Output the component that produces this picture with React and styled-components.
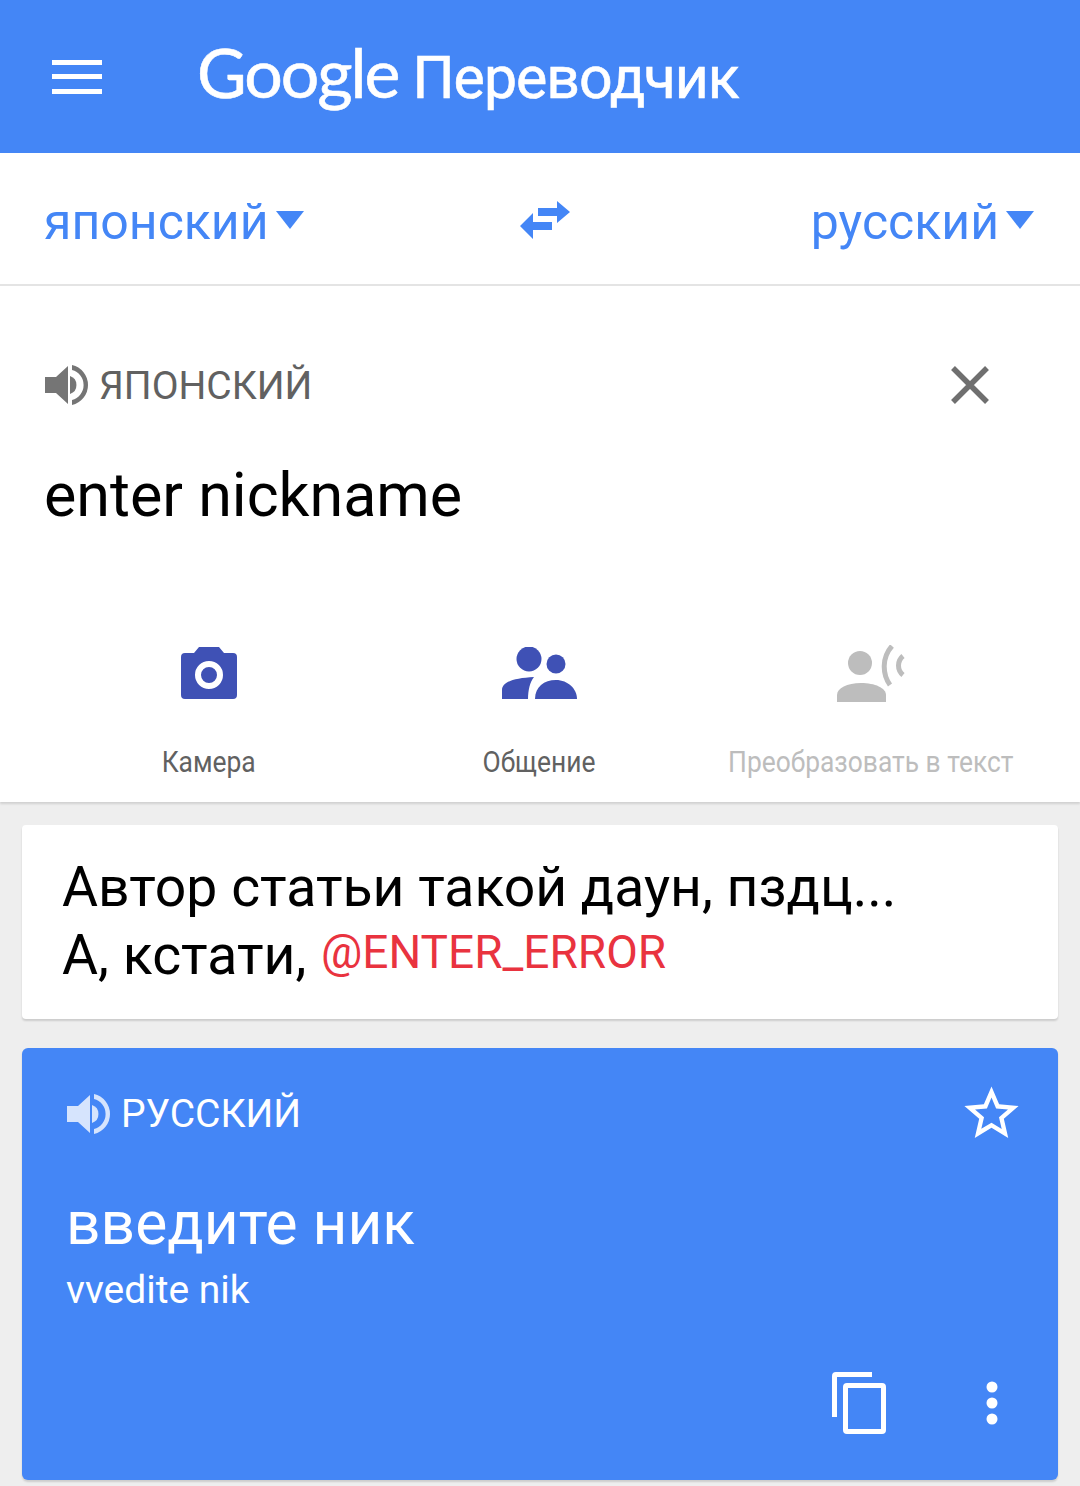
import React from "react";
import styled, { createGlobalStyle } from "styled-components";

const BLUE = "#4486f6";
const INDIGO = "#3f51b5";

const GlobalStyle = createGlobalStyle`
html, body {
  margin: 0;
  padding: 0;
  background: #eeeeee;
  font-family: Roboto, "Liberation Sans", sans-serif;
}
* { box-sizing: border-box; }
`;

const Page = styled.div`
width: 1080px;
height: 1486px;
overflow: hidden;
background: #eeeeee;
`;

const Header = styled.header`
height: 153px;
background: ${BLUE};
display: flex;
align-items: center;
padding-left: 52px;
color: #fff;
`;

const Burger = styled.div`
width: 50px;
height: 34px;
display: flex;
flex-direction: column;
justify-content: space-between;
margin-right: 95px;
span {
  display: block;
  height: 5px;
  background: #fff;
}
`;

const Logo = styled.div`
font-family: Lato, sans-serif;
font-size: 68px;
line-height: 1;
letter-spacing: -2px;
margin-top: -8px;
white-space: nowrap;
-webkit-text-stroke: 0.6px #fff;
`;

const Product = styled.span`
font-family: Roboto, sans-serif;
font-size: 59px;
letter-spacing: -1px;
margin-left: 14px;
`;

const LangBar = styled.div`
height: 133px;
background: #fff;
border-bottom: 2px solid #e4e4e4;
display: flex;
align-items: center;
justify-content: space-between;
padding: 6px 46px 0 44px;
color: ${BLUE};
`;

const Lang = styled.div`
display: flex;
align-items: center;
font-size: 50px;
line-height: 56px;
`;

const Caret = styled.span`
width: 0;
height: 0;
margin: -4px 0 0 7px;
border-left: 14px solid transparent;
border-right: 14px solid transparent;
border-top: 18px solid ${BLUE};
`;

const SwapButton = styled.div`
display: flex;
margin: -3px 0 0 -24px;
`;

const Source = styled.section`
height: 516px;
background: #fff;
box-shadow: 0 2px 2px rgba(0, 0, 0, 0.12);
display: flex;
flex-direction: column;
`;

const SourceHead = styled.div`
display: flex;
align-items: center;
justify-content: space-between;
padding: 75px 89px 0 45px;
svg:last-child { margin-top: -2px; }
`;

const Label = styled.div`
display: flex;
align-items: center;
gap: 10px;
font-size: 39px;
line-height: 50px;
color: ${(p) => p.$color};
svg { flex: none; margin: 0; }
`;

const SourceText = styled.div`
padding: 48px 0 0 44px;
font-size: 61px;
line-height: 72px;
color: #000;
`;

const Actions = styled.div`
display: grid;
grid-template-columns: repeat(3, 331px);
padding: 0 43px;
margin-top: 113px;
`;

const Action = styled.div`
display: flex;
flex-direction: column;
align-items: center;
white-space: nowrap;
color: ${(p) => (p.$off ? "#bdbdbd" : "#616161")};
`;

const ActionIcon = styled.div`
height: 58px;
display: flex;
align-items: center;
margin-bottom: 43px;
`;

const ActionName = styled.div`
font-size: 29px;
line-height: 34px;
transform: scaleX(0.91);
`;

const Cards = styled.div`
padding: 23px 22px 0;
display: flex;
flex-direction: column;
gap: 29px;
`;

const QuoteCard = styled.div`
height: 194px;
background: #fff;
border-radius: 4px;
box-shadow: 0 2px 2px rgba(0, 0, 0, 0.14);
padding: 30px 40px 0;
font-size: 55.300px;
line-height: 66px;
color: #000;
display: flex;
flex-direction: column;
gap: 2px;
`;

const Mention = styled.span`
color: #e9333f;
font-size: 46px;
line-height: 0;
vertical-align: 6px;
margin-left: 1px;
`;

const ResultCard = styled.div`
height: 432px;
background: ${BLUE};
border-radius: 6px;
box-shadow: 0 2px 2px rgba(0, 0, 0, 0.14);
padding: 33px 34px 0 44px;
color: #fff;
display: flex;
flex-direction: column;
`;

const ResultHead = styled.div`
display: flex;
align-items: center;
justify-content: space-between;
padding-left: 1px;
`;

const Translation = styled.div`
font-size: 60.500px;
line-height: 68px;
margin-top: 44px;
`;

const Translit = styled.div`
font-size: 39px;
line-height: 46px;
margin-top: 9px;
`;

const ResultTools = styled.div`
margin-top: auto;
display: flex;
justify-content: flex-end;
align-items: center;
gap: 100px;
padding: 0 26px 46px 0;
`;

const Speaker = ({ color, wave }) => (
  <svg width="44" height="44" viewBox="0 0 44 44">
    <path d="M0 14h11L23 3v38L11 30H0z" fill={color} />
    <path d="M25 13a9.500 9.500 0 0 1 0 18z" fill={wave || color} />
    <path d="M27 2a20.500 20.500 0 0 1 0 40v-5a15.500 15.500 0 0 0 0-30z" fill={wave || color} />
  </svg>
);

const Camera = () => (
  <svg width="56" height="52" viewBox="0 0 56 52">
    <path
      fillRule="evenodd"
      fill={INDIGO}
      d="M18 0h20l5 6h9a4 4 0 0 1 4 4v38a4 4 0 0 1-4 4H4a4 4 0 0 1-4-4V10a4 4 0 0 1 4-4h9zM28 14a14 14 0 1 0 0 28a14 14 0 0 0 0-28zM28 20a8 8 0 1 1 0 16a8 8 0 0 1 0-16z"
    />
  </svg>
);

const People = () => (
  <svg width="76" height="52" viewBox="0 0 76 52">
    <g fill={INDIGO}>
      <circle cx="27" cy="12" r="12.500" />
      <circle cx="54" cy="17" r="9.500" />
      <path d="M0 52V43C0 35 12 31 32 30C28 35 26 43 26 52Z" />
      <path d="M33 52C33 40 42 33 54 33C66 33 75 42 75 52Z" />
    </g>
  </svg>
);

const Listen = () => (
  <svg width="68" height="57" viewBox="0 0 68 57">
    <g fill="#bdbdbd">
      <circle cx="23" cy="18" r="12" />
      <path d="M0 57V50C0 43 10 38 24 38C38 38 49 43 49 50V57Z" />
    </g>
    <g fill="none" stroke="#bdbdbd" strokeWidth="5">
      <path d="M55 1C45 12 45 29 53 40" />
      <path d="M66 11C60 16 60 25 66 30" />
    </g>
  </svg>
);

const Swap = () => (
  <svg width="50" height="39" viewBox="0 0 50 39">
    <path fill={BLUE} d="M18 7H37V0L50 11 37 22V15H18ZM0 25L13 12V21H32V29H13V38Z" />
  </svg>
);

const Close = () => (
  <svg width="42" height="42" viewBox="0 0 42 42">
    <path d="M4 4l34 34M38 4L4 38" stroke="#6f6f6f" strokeWidth="5.500" fill="none" />
  </svg>
);

const Star = () => (
  <svg width="65" height="65" viewBox="0 0 24 24">
    <path
      fill="#fff"
      d="M22 9.240l-7.190-.620L12 2 9.190 8.630 2 9.240l5.460 4.730L5.820 21 12 17.270 18.180 21l-1.630-7.030L22 9.240zM12 15.400l-3.760 2.270 1-4.280-3.320-2.880 4.380-.380L12 6.100l1.710 4.040 4.380.380-3.320 2.880 1 4.280L12 15.400z"
    />
  </svg>
);

const Copy = () => (
  <svg width="54" height="62" viewBox="0 0 54 62">
    <path fill="#fff" fillRule="evenodd" d="M4 0h36v5H5v40H0V4a4 4 0 0 1 4-4zM15 11h35a4 4 0 0 1 4 4v43a4 4 0 0 1-4 4H15a4 4 0 0 1-4-4V15a4 4 0 0 1 4-4zM16 16v41h33V16z" />
  </svg>
);

const More = () => (
  <svg width="12" height="44" viewBox="0 0 12 44">
    <g fill="#fff">
      <circle cx="6" cy="6" r="5.500" />
      <circle cx="6" cy="22" r="5.500" />
      <circle cx="6" cy="38" r="5.500" />
    </g>
  </svg>
);

export default function App() {
  return (
    <Page>
      <GlobalStyle />
      <Header>
        <Burger><span /><span /><span /></Burger>
        <Logo>Google<Product>Переводчик</Product></Logo>
      </Header>
      <LangBar>
        <Lang>японский<Caret /></Lang>
        <SwapButton><Swap /></SwapButton>
        <Lang>русский<Caret /></Lang>
      </LangBar>
      <Source>
        <SourceHead>
          <Label $color="#616161"><Speaker color="#757575" />ЯПОНСКИЙ</Label>
          <Close />
        </SourceHead>
        <SourceText>enter nickname</SourceText>
        <Actions>
          <Action>
            <ActionIcon><Camera /></ActionIcon>
            <ActionName>Камера</ActionName>
          </Action>
          <Action>
            <ActionIcon><People /></ActionIcon>
            <ActionName>Общение</ActionName>
          </Action>
          <Action $off>
            <ActionIcon><Listen /></ActionIcon>
            <ActionName>Преобразовать в текст</ActionName>
          </Action>
        </Actions>
      </Source>
      <Cards>
        <QuoteCard>
          <div>Автор статьи такой даун, пздц...</div>
          <div>А, кстати, <Mention>@ENTER_ERROR</Mention></div>
        </QuoteCard>
        <ResultCard>
          <ResultHead>
            <Label $color="#ffffff"><Speaker color="#d6e4fd" />РУССКИЙ</Label>
            <Star />
          </ResultHead>
          <Translation>введите ник</Translation>
          <Translit>vvedite nik</Translit>
          <ResultTools><Copy /><More /></ResultTools>
        </ResultCard>
      </Cards>
    </Page>
  );
}
